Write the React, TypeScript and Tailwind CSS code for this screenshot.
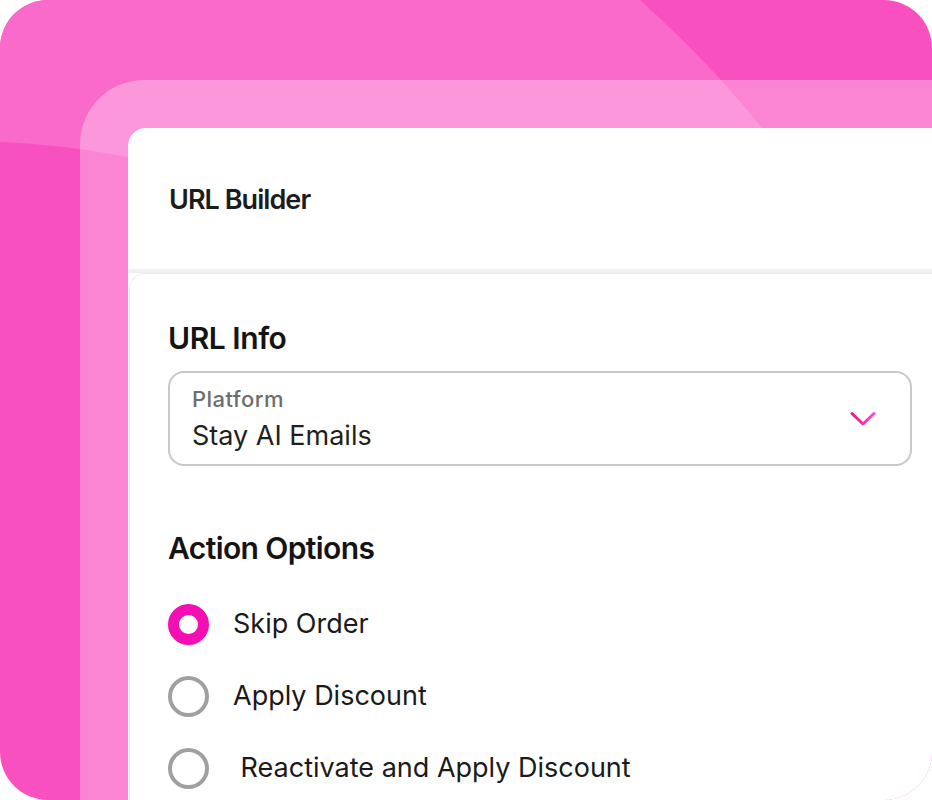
import { useState } from 'react'

const actions = ['Skip Order', 'Apply Discount', ' Reactivate and Apply Discount']

function Chevron() {
  return (
    <svg width="26" height="16" viewBox="0 0 26 16" fill="none">
      <defs>
        <linearGradient id="chev" x1="0" y1="0" x2="1" y2="0">
          <stop offset="0" stopColor="#ef1488" />
          <stop offset="1" stopColor="#f54fd0" />
        </linearGradient>
      </defs>
      <path d="M2 2.5 L13 13 L24 2.5" stroke="url(#chev)" strokeWidth="3" strokeLinecap="round" strokeLinejoin="round" />
    </svg>
  )
}

function Radio({ checked }: { checked: boolean }) {
  return checked ? (
    <span className="w-[41px] h-[41px] rounded-full border-[11px] border-[#f40fb2] bg-white shrink-0" />
  ) : (
    <span className="w-[41px] h-[41px] rounded-full border-4 border-[#a0a0a0] bg-white shrink-0" />
  )
}

export default function App() {
  const [selected, setSelected] = useState(0)

  return (
    <div className="w-[932px] h-[800px] bg-white font-['Inter',sans-serif]">
      <div className="relative w-[932px] h-[800px] rounded-[48px] overflow-hidden bg-[#f950c0] flex pt-20 pl-20">
        {/* background shapes */}
        <svg className="absolute inset-0" width="932" height="800" viewBox="0 0 932 800">
          <path
            d="M0 0 H640 Q712 65 762 128 L790 240 L140 200 L128 157 Q60 144 0 142 Z"
            fill="#f96aca"
          />
        </svg>

        <div className="relative flex-1 flex rounded-tl-[64px] bg-white/30 pt-12 pl-12">
          <div className="w-[824px] shrink-0 bg-white rounded-tl-[18px] flex flex-col">
            <div className="h-[145px] pt-[56px] pl-[41px] border-b-4 border-[#f0f0f0]">
              <h1 className="text-[27px] leading-[32px] font-semibold tracking-[-0.035em] text-[#1c1c1c]">
                URL Builder
              </h1>
            </div>

            <div className="flex-1 ml-px rounded-tl-2xl border-l border-t border-[#ebebeb] pt-[46px] pl-[38px] pr-10">
              <h2 className="text-[30px] leading-[36px] font-semibold tracking-[-0.015em] text-[#141414]">
                URL Info
              </h2>

              <button className="mt-[15px] w-full h-[95px] rounded-[16px] border-2 border-[#c9c9c9] pl-[22px] pr-[34px] flex items-center justify-between text-left">
                <div className="flex flex-col">
                  <span className="text-[22px] leading-[26px] font-medium tracking-[0.02em] text-[#6d6d6d]">
                    Platform
                  </span>
                  <span className="mt-2 text-[27px] leading-[32px] text-[#1f1f1f]">
                    Stay AI Emails
                  </span>
                </div>
                <Chevron />
              </button>

              <h2 className="mt-16 text-[30px] leading-[36px] font-semibold tracking-[-0.02em] text-[#141414]">
                Action Options
              </h2>

              <div className="mt-[38px] flex flex-col gap-8">
                {actions.map((label, i) => (
                  <label
                    key={label}
                    onClick={() => setSelected(i)}
                    className="flex items-center gap-6 h-10 cursor-pointer"
                  >
                    <Radio checked={selected === i} />
                    <span className="text-[27px] leading-[32px] text-[#1a1a1a] whitespace-pre">
                      {label}
                    </span>
                  </label>
                ))}
              </div>
            </div>
          </div>
        </div>
      </div>
    </div>
  )
}
